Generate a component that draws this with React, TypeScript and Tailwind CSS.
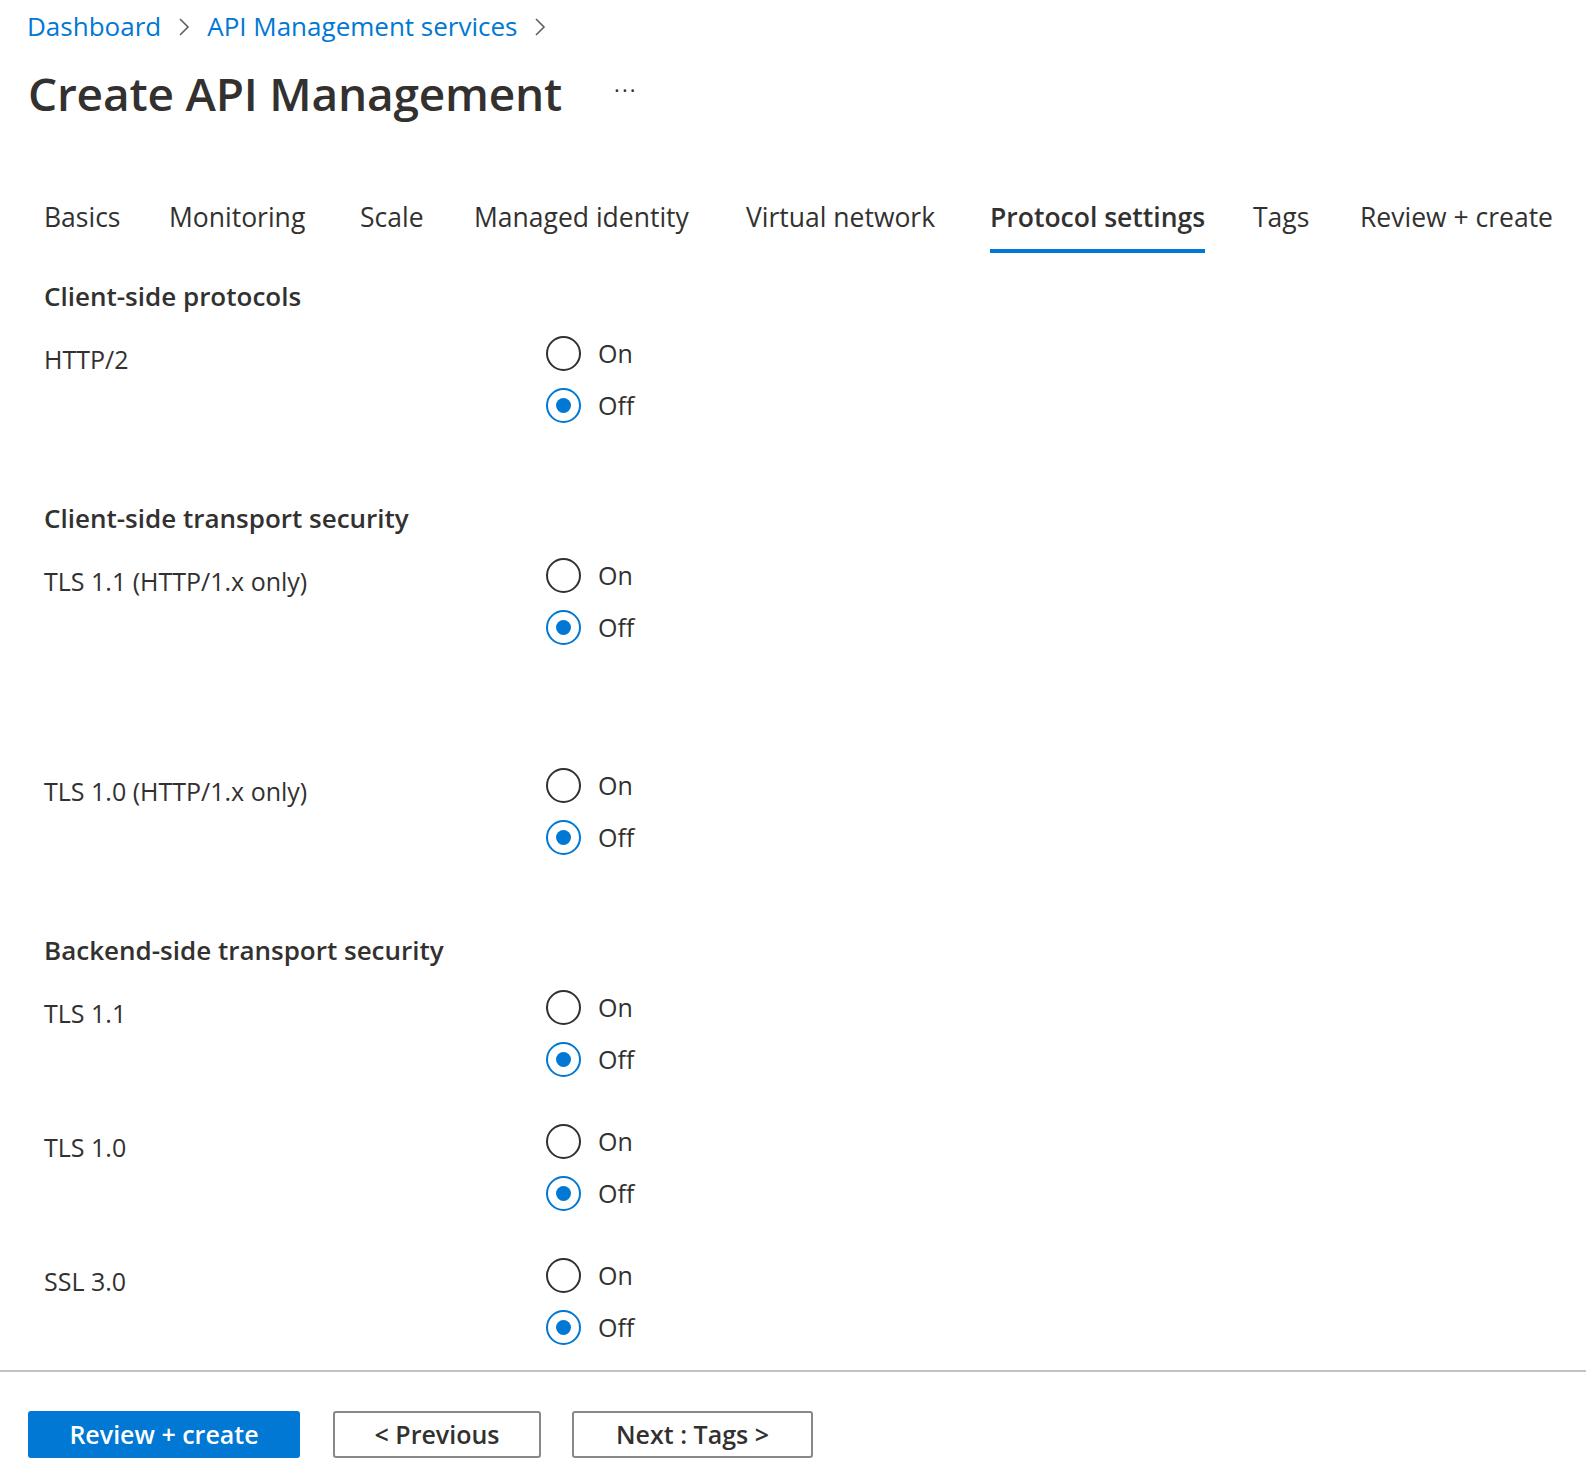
import { useState } from 'react'

type Setting = { id: string; label: string; gapBefore?: string }
type Section = { title: string; gapBefore: string; rows: Setting[] }

// widths keep each tab starting where the portal puts it
const tabs = [
  { label: 'Basics', w: 'w-[125px]' },
  { label: 'Monitoring', w: 'w-[191px]' },
  { label: 'Scale', w: 'w-[114px]' },
  { label: 'Managed identity', w: 'w-[272px]' },
  { label: 'Virtual network', w: 'w-[244px]' },
  { label: 'Protocol settings', w: 'w-[263px]' },
  { label: 'Tags', w: 'w-[107px]' },
  { label: 'Review + create', w: 'w-auto' },
]

const sections: Section[] = [
  { title: 'Client-side protocols', gapBefore: 'mt-[25px]', rows: [{ id: 'http2', label: 'HTTP/2' }] },
  {
    title: 'Client-side transport security',
    gapBefore: 'mt-[69px]',
    rows: [
      { id: 'c-tls11', label: 'TLS 1.1 (HTTP/1.x only)' },
      { id: 'c-tls10', label: 'TLS 1.0 (HTTP/1.x only)', gapBefore: 'mt-[106px]' },
    ],
  },
  {
    title: 'Backend-side transport security',
    gapBefore: 'mt-[69px]',
    rows: [
      { id: 'b-tls11', label: 'TLS 1.1' },
      { id: 'b-tls10', label: 'TLS 1.0', gapBefore: 'mt-[30px]' },
      { id: 'b-ssl30', label: 'SSL 3.0', gapBefore: 'mt-[30px]' },
    ],
  },
]

function Chevron() {
  return (
    <svg width="12" height="20" viewBox="0 0 12 20" className="mx-[17px]" aria-hidden="true">
      <polyline points="2,2 10,10 2,18" fill="none" stroke="#605e5c" strokeWidth="1.6" />
    </svg>
  )
}

function Radio({ checked, label, onClick }: { checked: boolean; label: string; onClick: () => void }) {
  return (
    <button type="button" onClick={onClick} className="flex h-[52px] items-center text-left">
      <span
        className={`flex h-[35px] w-[35px] items-center justify-center rounded-full border-2 ${checked ? 'border-[#0078d4]' : 'border-[#323130]'}`}
      >
        {checked && <span className="h-[15px] w-[15px] rounded-full bg-[#0078d4]" />}
      </span>
      <span className="ml-[17px] text-[25px] leading-[36px] text-[#323130]">{label}</span>
    </button>
  )
}

export default function App() {
  const [values, setValues] = useState<Record<string, 'on' | 'off'>>({
    http2: 'off',
    'c-tls11': 'off',
    'c-tls10': 'off',
    'b-tls11': 'off',
    'b-tls10': 'off',
    'b-ssl30': 'off',
  })

  return (
    <div className="min-h-screen bg-white font-['Segoe_UI','Open_Sans',sans-serif] text-[#323130]">
      {/* Breadcrumb */}
      <div className="flex h-[53px] items-center pl-[27px] text-[26px] text-[#0078d4]">
        <span>Dashboard</span>
        <Chevron />
        <span>API Management services</span>
        <Chevron />
      </div>

      {/* Title */}
      <div className="mt-[8px] flex h-[64px] items-center pl-[28px]">
        <h1 className="text-[46px] font-semibold leading-[64px] tracking-[-0.2px]">Create API Management</h1>
        <span className="ml-[52px] pb-[8px] text-[22px] tracking-[2px]">···</span>
      </div>

      {/* Tabs */}
      <nav className="mt-[74px] flex pl-[44px]">
        {tabs.map((t) => {
          const active = t.label === 'Protocol settings'
          return (
            <div key={t.label} className={`${t.w} shrink-0`}>
              <span
                className={`inline-block border-b-4 pb-[14px] text-[26.5px] leading-[36px] ${active ? 'border-[#0078d4] font-semibold' : 'border-transparent'}`}
              >
                {t.label}
              </span>
            </div>
          )
        })}
      </nav>

      {/* Form */}
      <div className="px-[44px]">
        {sections.map((s) => (
          <section key={s.title} className={s.gapBefore}>
            <h2 className="text-[26px] font-semibold leading-[36px]">{s.title}</h2>
            <div className="mt-[13px]">
              {s.rows.map((r) => (
                <div key={r.id} className={`grid grid-cols-[502px_1fr] ${r.gapBefore ?? ''}`}>
                  <div className="pt-[14px] text-[25px] leading-[36px]">{r.label}</div>
                  <div className="flex flex-col">
                    <Radio checked={values[r.id] === 'on'} label="On" onClick={() => setValues((v) => ({ ...v, [r.id]: 'on' }))} />
                    <Radio checked={values[r.id] === 'off'} label="Off" onClick={() => setValues((v) => ({ ...v, [r.id]: 'off' }))} />
                  </div>
                </div>
              ))}
            </div>
          </section>
        ))}
      </div>

      {/* Footer */}
      <div className="mt-[17px] border-t-2 border-[#c2c2c2] pl-[28px] pt-[39px]">
        <div className="flex items-center">
          <button type="button" className="h-[47px] w-[272px] rounded-[3px] bg-[#0078d4] text-[25px] font-semibold text-white">
            Review + create
          </button>
          <button type="button" className="ml-[33px] h-[47px] w-[208px] rounded-[3px] border-2 border-[#8a8886] text-[25px] font-semibold">
            &lt; Previous
          </button>
          <button type="button" className="ml-[31px] h-[47px] w-[241px] rounded-[3px] border-2 border-[#8a8886] text-[25px] font-semibold">
            Next : Tags &gt;
          </button>
        </div>
      </div>
    </div>
  )
}
